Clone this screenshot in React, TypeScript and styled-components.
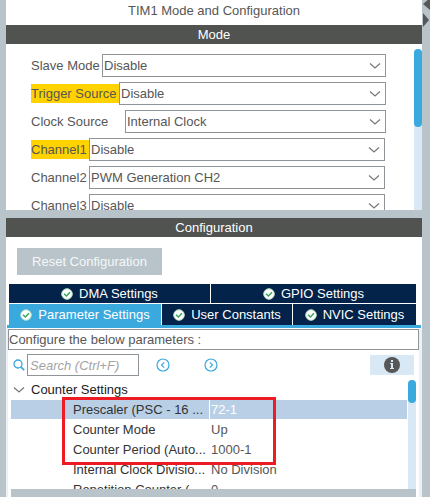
import React from "react";
import styled, { createGlobalStyle, css } from "styled-components";

const GlobalStyle = createGlobalStyle`
  * { box-sizing: border-box; }
  body {
    margin: 0;
    background: #ffffff;
    color: #565656;
    font: 13px/20px "Liberation Sans", Arial, sans-serif;
  }
  button, input, select { font: inherit; color: inherit; }
`;

const Frame = styled.div`
  display: flex;
  height: 100vh;
  padding-right: 3px;
  overflow: hidden;
`;

const Edge = styled.div<{ $width: number }>`
  flex: 0 0 ${(p) => p.$width}px;
  background: #b9c4ca;
`;

const Main = styled.main`
  flex: 1;
  min-width: 0;
  display: flex;
  flex-direction: column;
`;

const Title = styled.h1`
  margin: 0;
  flex: none;
  height: 25px;
  padding-top: 1px;
  font-size: 13px;
  font-weight: normal;
  line-height: 20px;
  text-align: center;
`;

const SectionBar = styled.h2`
  margin: 0;
  flex: none;
  height: 19px;
  background: #515351;
  color: #ffffff;
  font-size: 13px;
  font-weight: normal;
  line-height: 19px;
  text-align: center;
`;

const ModePanel = styled.section`
  flex: none;
  display: flex;
  height: 166px;
  padding-top: 5px;
  overflow: hidden;
`;

const ModeRows = styled.div`
  flex: 1;
  display: flex;
  flex-direction: column;
  gap: 5px;
  padding: 5px 28px 0 25px;
`;

const ModeRow = styled.div<{ $inset?: boolean }>`
  flex: none;
  display: flex;
  align-items: center;
  padding-right: ${(p) => (p.$inset ? 1 : 0)}px;
`;

const ModeLabel = styled.label<{ $width: number; $marked?: boolean }>`
  flex: 0 0 ${(p) => p.$width}px;
  height: 19px;
  line-height: 19px;
  white-space: nowrap;
  background: ${(p) => (p.$marked ? "#ffd200" : "transparent")};
`;

const SelectBox = styled.div`
  flex: 1;
  display: grid;
  align-items: center;
  height: 23px;
  border: 1px solid #8f9498;
  background: #ffffff;

  > * { grid-area: 1 / 1; }
  > svg { justify-self: end; margin-right: 4px; pointer-events: none; }
`;

const Select = styled.select`
  appearance: none;
  width: 100%;
  height: 21px;
  padding: 0 20px 0 1px;
  border: 0;
  background: transparent;
  line-height: 20px;
`;

const ScrollTrack = styled.div`
  flex: 0 0 8px;
  background: #d9e8f5;
  border-radius: 4px 4px 0 0;
`;

const ScrollThumb = styled.div<{ $height: number }>`
  height: ${(p) => p.$height}px;
  border-radius: 4px;
  background: #3aa9dd;
`;

const Splitter = styled.div`
  flex: 0 0 8px;
  background: #b9c4ca;
`;

const ConfigPanel = styled.section`
  flex: 1;
  min-height: 0;
  display: flex;
  flex-direction: column;
  padding-top: 11px;
`;

const ResetButton = styled.button`
  flex: none;
  align-self: flex-start;
  width: 145px;
  height: 27px;
  margin: 0 0 9px 11px;
  padding: 0;
  border: 0;
  background: #b9c4ca;
  color: #f4f7f9;
`;

const Tabs = styled.div`
  flex: none;
  display: flex;
  flex-direction: column;
  gap: 1px;
  padding: 0 6px 0 3px;
`;

const TabRow = styled.div<{ $columns: string; $height: number }>`
  display: grid;
  grid-template-columns: ${(p) => p.$columns};
  gap: 1px;
  height: ${(p) => p.$height}px;
`;

const TabButton = styled.button<{ $active?: boolean }>`
  display: flex;
  align-items: center;
  justify-content: center;
  gap: 6px;
  min-width: 0;
  padding: 0;
  border: 0;
  background: ${(p) => (p.$active ? "#3aa9dd" : "#03234b")};
  color: #ffffff;
  white-space: nowrap;
  line-height: 18px;
`;

const TabRule = styled.div`
  flex: none;
  height: 3px;
  margin: 0 1px;
  background: #3aa9dd;
`;

const TabBody = styled.div`
  flex: 1;
  min-height: 0;
  display: flex;
  flex-direction: column;
  padding-top: 1px;
  border: solid #eef1f4;
  border-width: 0 3px 0 2px;
`;

const Hint = styled.p`
  flex: none;
  margin: 0;
  height: 21px;
  border: 1px solid #8f9498;
  line-height: 19px;
`;

const Toolbar = styled.div`
  flex: none;
  display: flex;
  align-items: center;
  height: 22px;
  margin: 4px 5px 4px 5px;
`;

const SearchIconBox = styled.label`
  display: flex;
  flex: 0 0 14px;
`;

const SearchInput = styled.input`
  width: 112px;
  height: 22px;
  padding: 0 0 0 2px;
  border: 1px solid #8f9498;
  border-radius: 0;
  background: #ffffff;
  font-style: italic;

  &::placeholder { color: #a3a3a3; opacity: 1; }
`;

const StepButton = styled.button`
  display: flex;
  width: 14px;
  height: 14px;
  margin-left: 17px;
  padding: 0;
  border: 0;
  background: transparent;

  & + & { margin-left: 34px; }
`;

const InfoButton = styled.button`
  display: flex;
  align-items: center;
  justify-content: center;
  width: 44px;
  height: 20px;
  margin-left: auto;
  padding: 0;
  border: 0;
  background: #d9e8f5;
`;

const TreeArea = styled.div`
  position: relative;
  flex: 1;
  min-height: 0;
  display: flex;
  margin: 0 3px;
`;

const TreeRows = styled.div`
  flex: 1;
  min-width: 0;
  overflow: hidden;
`;

const GroupButton = styled.button`
  display: flex;
  align-items: center;
  gap: 6px;
  height: 20px;
  padding: 0 0 0 2px;
  border: 0;
  background: transparent;
  color: #1b1b1b;
  line-height: 20px;
`;

const ParamTable = styled.table`
  width: calc(100% - 1px);
  table-layout: fixed;
  border-collapse: collapse;
`;

const ParamRow = styled.tr<{ $selected?: boolean }>`
  height: 20px;
  ${(p) =>
    p.$selected &&
    css`
      background: linear-gradient(#b9cfe6 19px, #ffffff 19px);
      td { color: #ffffff; }
      td::before { background: #ffffff; }
    `}
`;

const ParamName = styled.th`
  width: 198px;
  padding: 0 0 0 62px;
  color: #333333;
  font-weight: normal;
  line-height: 20px;
  text-align: left;
  white-space: nowrap;
`;

const ParamValue = styled.td`
  padding: 0;
  line-height: 20px;
  white-space: nowrap;

  &::before {
    content: "";
    display: inline-block;
    width: 1px;
    height: 19px;
    margin-right: 1px;
    vertical-align: top;
  }
`;

const Highlight = styled.div`
  position: absolute;
  top: 17px;
  left: 51px;
  width: 214px;
  height: 68px;
  border: 3px solid #ed1c24;
  pointer-events: none;
`;

const Footer = styled.div`
  flex: 0 0 8px;
  margin: 0 0 0 3px;
  border-right: 3px solid #ffffff;
  background: #b9c4ca;
`;

const Chevron = () => (
  <svg width="12" height="8" viewBox="0 0 12 8" fill="none" stroke="#777" strokeWidth="1.2">
    <path d="M1 1.5 6 6l5-4.5" />
  </svg>
);

const CheckIcon = () => (
  <svg width="12" height="12" viewBox="0 0 12 12" fill="none">
    <circle cx="6" cy="6" r="5.3" fill="#fff" stroke="#b5dfc0" />
    <path d="M3 5.8 5.4 8 9 4.3" stroke="#35a65a" strokeWidth="1.5" />
  </svg>
);

const SearchIcon = () => (
  <svg width="12" height="12" viewBox="0 0 12 12" fill="none" stroke="#3aa9dd">
    <circle cx="5" cy="5" r="4" strokeWidth="1.3" />
    <path d="m7.8 7.8 3.4 3.4" strokeWidth="1.7" />
  </svg>
);

const StepIcon = ({ next }: { next?: boolean }) => (
  <svg width="14" height="14" viewBox="0 0 14 14" fill="none" stroke="#3aa9dd" strokeWidth="1.2">
    <circle cx="7" cy="7" r="6" />
    <path d={next ? "m5.8 4.3 2.7 2.7-2.7 2.7" : "M8.2 4.3 5.5 7l2.7 2.7"} />
  </svg>
);

const InfoIcon = () => (
  <svg width="16" height="16" viewBox="0 0 16 16">
    <circle cx="8" cy="8" r="8" fill="#575757" />
    <path d="M7 3h2v2H7zM6 6h3v5h1v1H6v-1h1V7H6z" fill="#d9e8f5" />
  </svg>
);

const CollapseArrows = () => (
  <svg width="8" height="28" viewBox="0 0 8 28" fill="#555759">
    <path d="M8-2v12L1 4zM1 13v14l6-7z" />
  </svg>
);

const modes = [
  { label: "Slave Mode", value: "Disable", width: 71 },
  { label: "Trigger Source", value: "Disable", width: 88, marked: true },
  { label: "Clock Source", value: "Internal Clock", width: 94 },
  { label: "Channel1", value: "Disable", width: 58, marked: true, inset: true },
  { label: "Channel2", value: "PWM Generation CH2", width: 58, inset: true },
  { label: "Channel3", value: "Disable", width: 58, inset: true },
];

const params = [
  { name: "Prescaler (PSC - 16 ...", value: "72-1", selected: true },
  { name: "Counter Mode", value: "Up" },
  { name: "Counter Period (Auto...", value: "1000-1" },
  { name: "Internal Clock Divisio...", value: "No Division" },
  { name: "Repetition Counter (...", value: "0" },
];

const Tab = ({ label, active }: { label: string; active?: boolean }) => (
  <TabButton type="button" role="tab" aria-selected={!!active} $active={active}>
    <CheckIcon />
    {label}
  </TabButton>
);

export default function App() {
  return (
    <>
      <GlobalStyle />
      <Frame>
        <Edge $width={6} />
        <Main>
          <Title>TIM1 Mode and Configuration</Title>
          <SectionBar>Mode</SectionBar>
          <ModePanel>
            <ModeRows>
              {modes.map((m, i) => (
                <ModeRow key={m.label} $inset={m.inset}>
                  <ModeLabel htmlFor={`mode-${i}`} $width={m.width} $marked={m.marked}>
                    {m.label}
                  </ModeLabel>
                  <SelectBox>
                    <Select id={`mode-${i}`} defaultValue={m.value}>
                      <option>{m.value}</option>
                    </Select>
                    <Chevron />
                  </SelectBox>
                </ModeRow>
              ))}
            </ModeRows>
            <ScrollTrack>
              <ScrollThumb $height={78} />
            </ScrollTrack>
          </ModePanel>
          <Splitter />
          <SectionBar>Configuration</SectionBar>
          <ConfigPanel>
            <ResetButton type="button">Reset Configuration</ResetButton>
            <Tabs role="tablist">
              <TabRow $columns="201fr 205fr" $height={19}>
                <Tab label="DMA Settings" />
                <Tab label="GPIO Settings" />
              </TabRow>
              <TabRow $columns="152fr 130fr 123fr" $height={21}>
                <Tab label="Parameter Settings" active />
                <Tab label="User Constants" />
                <Tab label="NVIC Settings" />
              </TabRow>
            </Tabs>
            <TabRule />
            <TabBody>
              <Hint>Configure the below parameters :</Hint>
              <Toolbar>
                <SearchIconBox htmlFor="search" aria-label="Search">
                  <SearchIcon />
                </SearchIconBox>
                <SearchInput id="search" placeholder="Search (Ctrl+F)" />
                <StepButton type="button" aria-label="Previous">
                  <StepIcon />
                </StepButton>
                <StepButton type="button" aria-label="Next">
                  <StepIcon next />
                </StepButton>
                <InfoButton type="button" aria-label="Information">
                  <InfoIcon />
                </InfoButton>
              </Toolbar>
              <TreeArea>
                <TreeRows>
                  <GroupButton type="button" aria-expanded="true">
                    <Chevron />
                    Counter Settings
                  </GroupButton>
                  <ParamTable>
                    <tbody>
                      {params.map((p) => (
                        <ParamRow key={p.name} $selected={p.selected}>
                          <ParamName scope="row">{p.name}</ParamName>
                          <ParamValue>{p.value}</ParamValue>
                        </ParamRow>
                      ))}
                    </tbody>
                  </ParamTable>
                </TreeRows>
                <ScrollTrack>
                  <ScrollThumb $height={23} />
                </ScrollTrack>
                <Highlight />
              </TreeArea>
              <Footer />
            </TabBody>
          </ConfigPanel>
        </Main>
        <Edge $width={8}>
          <CollapseArrows />
        </Edge>
      </Frame>
    </>
  );
}
